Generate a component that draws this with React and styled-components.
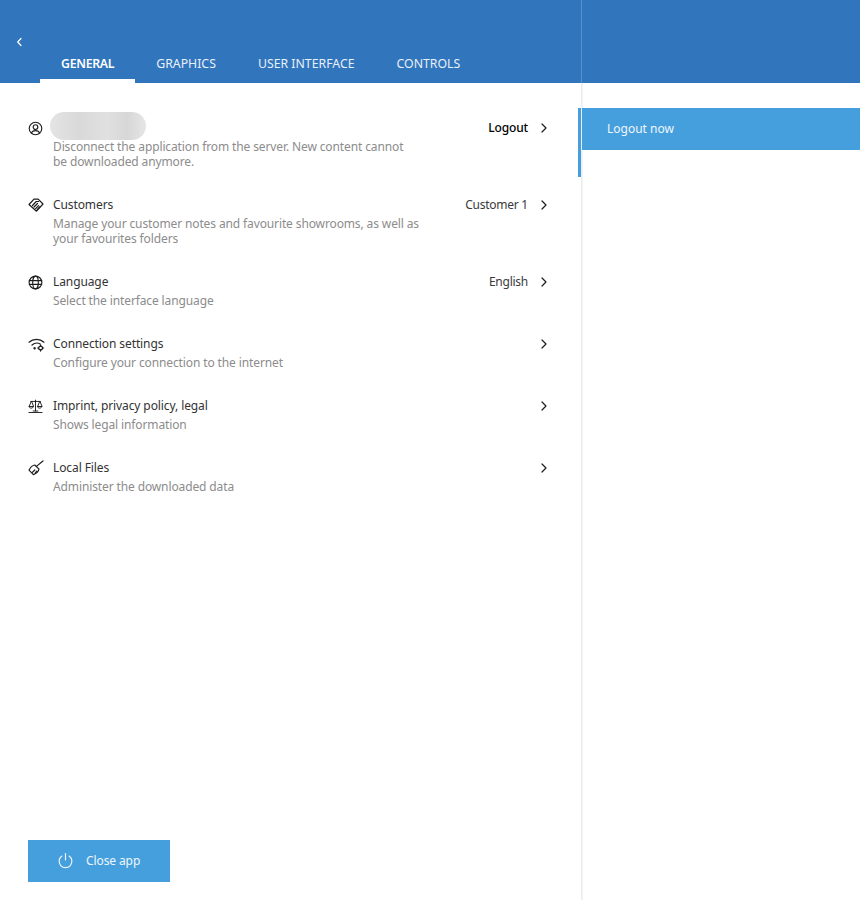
import React from "react";
import styled, { createGlobalStyle } from "styled-components";

const Global = createGlobalStyle`
  html, body { margin: 0; padding: 0; background: #fff; }
  body { font-family: "Noto Sans", "Open Sans", sans-serif; }
`;

const Page = styled.div`
  width: 860px;
  height: 900px;
  display: flex;
  flex-direction: column;
  overflow: hidden;
`;

const Header = styled.header`
  height: 83px;
  flex: none;
  background: #3175bd;
  display: grid;
  grid-template-columns: 581px 2px 1fr;
`;

const HeaderLeft = styled.div`
  display: flex;
  align-items: flex-end;
  position: relative;
`;

const HeaderRule = styled.div`
  background: #5a90cb;
  width: 1px;
`;

const BackButton = styled.button`
  position: absolute;
  left: 13px;
  top: 36px;
  width: 12px;
  height: 12px;
  padding: 0;
  border: 0;
  background: none;
  color: #fff;
  display: flex;
`;

const Tabs = styled.nav`
  display: flex;
  margin-left: 40px;
`;

const Tab = styled.div`
  height: 38px;
  padding: 11px 21px 0;
  box-sizing: border-box;
  display: flex;
  align-items: flex-start;
  line-height: 16px;
  font-size: 12.3px;
  letter-spacing: ${(p) => (p.$active ? "-0.3px" : "0")};
  color: ${(p) => (p.$active ? "#fff" : "#e8f0f8")};
  font-weight: ${(p) => (p.$active ? 600 : 400)};
  border-bottom: 4px solid ${(p) => (p.$active ? "#fff" : "transparent")};
  white-space: nowrap;
`;

const Body = styled.div`
  flex: 1;
  display: grid;
  grid-template-columns: 581px 2px 1fr;
  min-height: 0;
`;

const Left = styled.main`
  display: flex;
  flex-direction: column;
  justify-content: space-between;
  padding: 36.4px 0 18px;
`;

const List = styled.div`
  display: flex;
  flex-direction: column;
`;

const Row = styled.div`
  display: grid;
  grid-template-columns: 25px 1fr auto 20px;
  padding: 0 33px 0 28px;
  position: relative;
  margin-bottom: 27.5px;
`;

const Indicator = styled.span`
  position: absolute;
  right: 0;
  top: -11.4px;
  width: 3px;
  height: 69px;
  background: #459fdc;
`;

const IconCell = styled.div`
  width: 17px;
  height: 18px;
  display: flex;
  align-items: center;
  color: #1c1c1c;
`;

const TextCell = styled.div`
  min-width: 0;
`;

const Title = styled.div`
  font-size: 12px;
  line-height: 18px;
  letter-spacing: -0.1px;
  color: #333;
`;

const Blur = styled.div`
  width: 96px;
  height: 28px;
  margin: -7.4px 0 -2.6px -3px;
  border-radius: 14px;
  background: linear-gradient(90deg, #e4e4e4, #d9d9d9 30%, #e0e0e0 60%, #d7d7d7 80%, #e6e6e6);
  filter: blur(0.6px);
`;

const Description = styled.div`
  margin-top: 1.5px;
  font-size: 12px;
  line-height: 15px;
  letter-spacing: -0.12px;
  color: #8c8c8c;
  white-space: pre-line;
`;

const Value = styled.div`
  font-size: 12px;
  line-height: 18px;
  letter-spacing: ${(p) => (p.$strong ? "-0.15px" : "-0.25px")};
  color: ${(p) => (p.$strong ? "#000" : "#3a3a3a")};
  font-weight: ${(p) => (p.$strong ? 500 : 400)};
  white-space: nowrap;
`;

const Chevron = styled.div`
  height: 18px;
  display: flex;
  align-items: center;
  justify-content: flex-end;
  color: #1c1c1c;
`;

const CloseButton = styled.button`
  margin-left: 28px;
  width: 142px;
  height: 42px;
  background: #459fdc;
  border: 0;
  padding: 0 0 2px 29px;
  display: flex;
  align-items: center;
  gap: 12px;
  color: #eef6fc;
  font-family: inherit;
  font-size: 12px;
  letter-spacing: -0.1px;
`;

const Divider = styled.div`
  background: linear-gradient(90deg, #e9e9e9, #f7f7f7);
`;

const Right = styled.aside`
  padding-top: 25px;
  margin-left: -1px;
  display: flex;
  flex-direction: column;
`;

const ActionRow = styled.div`
  height: 42px;
  box-sizing: border-box;
  background: #459fdc;
  color: #eef6fc;
  font-size: 12px;
  display: flex;
  align-items: center;
  padding: 0 0 2px 25px;
`;

const Svg = ({ size = 16, children, sw = 1.2, vb = 16 }) => (
  <svg width={size} height={size} viewBox={`0 0 ${vb} ${vb}`} fill="none" stroke="currentColor" strokeWidth={sw} strokeLinecap="round" strokeLinejoin="round">
    {children}
  </svg>
);

const UserIcon = () => (
  <Svg size={15}>
    <circle cx="8" cy="8" r="6.7" />
    <circle cx="8" cy="6.5" r="2.5" />
    <path d="M3.6 13c.6-1.9 2.2-2.8 4.4-2.8s3.8.9 4.4 2.8" />
  </Svg>
);

const HandshakeIcon = () => (
  <Svg size={16}>
    <path d="M1 7.5 6 2.2h4.2L15 7l-6.5 7.2z" />
    <path d="M4.5 8.5 8.2 4.5h2.4" />
    <path d="M6 10l3.5-3.5M7.6 11.6l3-3M9.2 12.6l2.4-2.6" />
  </Svg>
);

const GlobeIcon = () => (
  <Svg size={15}>
    <circle cx="8" cy="8" r="6.8" />
    <ellipse cx="8" cy="8" rx="3" ry="6.8" />
    <path d="M1.4 6h13.2M1.4 10h13.2" />
  </Svg>
);

const WifiIcon = () => (
  <Svg size={17} vb={17}>
    <path d="M1 6.2C5.2 2.3 11.8 2.3 16 6.2" />
    <path d="M4 9c2.6-2.2 5.6-2.5 8.2-1" />
    <circle cx="6.6" cy="12.2" r=".6" />
    <circle cx="12.6" cy="12" r="1.9" />
    <path d="M12.6 8.9v1.2M12.6 13.9v1.2M15.7 12h-1.2M10.7 12H9.5" />
  </Svg>
);

const ScalesIcon = () => (
  <Svg size={15} sw={1}>
    <path d="M8 1.2v11.6M3 2.6h10M1 14.4h14M5.5 12.8h5" />
    <path d="M3.5 2.6 1.2 8c.3 2.4 4.3 2.4 4.6 0zM12.5 2.6 10.2 8c.3 2.4 4.3 2.4 4.6 0zM1.2 8h4.6M10.2 8h4.6" />
  </Svg>
);

const BroomIcon = () => (
  <Svg size={16}>
    <path d="M15 1 8.4 6.4" />
    <path d="M6.8 5 11 9.2c-.5 2.2-3.4 4.6-5.6 5.4L1 10.2C2 8 4.6 5.5 6.8 5z" />
    <path d="M4.3 12.4 6.8 10M7.4 12.6l1.4-1.4" />
  </Svg>
);

const RightChevron = () => (
  <svg width="7" height="10" viewBox="0 0 7 10" fill="none" stroke="currentColor" strokeWidth="1.2" strokeLinecap="round" strokeLinejoin="round">
    <path d="M1 1 5 5 1 9" />
  </svg>
);

const PowerIcon = () => (
  <Svg size={17} sw={1.1}>
    <path d="M8 1.5v6" />
    <path d="M4.6 3.8a6 6 0 1 0 6.8 0" />
  </Svg>
);

const rows = [
  { icon: <UserIcon />, blur: true, desc: "Disconnect the application from the server. New content cannot\nbe downloaded anymore.", value: "Logout", strong: true, active: true },
  { icon: <HandshakeIcon />, title: "Customers", desc: "Manage your customer notes and favourite showrooms, as well as\nyour favourites folders", value: "Customer 1" },
  { icon: <GlobeIcon />, title: "Language", desc: "Select the interface language", value: "English" },
  { icon: <WifiIcon />, title: "Connection settings", desc: "Configure your connection to the internet" },
  { icon: <ScalesIcon />, title: "Imprint, privacy policy, legal", desc: "Shows legal information" },
  { icon: <BroomIcon />, title: "Local Files", desc: "Administer the downloaded data" },
];

const tabs = [
  { label: "GENERAL", active: true },
  { label: "GRAPHICS" },
  { label: "USER INTERFACE" },
  { label: "CONTROLS" },
];

export default function App() {
  return (
    <Page>
      <Global />
      <Header>
        <HeaderLeft>
          <BackButton aria-label="Back">
            <svg width="12" height="12" viewBox="0 0 12 12" fill="none" stroke="currentColor" strokeWidth="1.2" strokeLinecap="round" strokeLinejoin="round">
              <path d="M8 2.5 4.7 6 8 9.5" />
            </svg>
          </BackButton>
          <Tabs>
            {tabs.map((t) => (
              <Tab key={t.label} $active={t.active}>
                {t.label}
              </Tab>
            ))}
          </Tabs>
        </HeaderLeft>
        <HeaderRule />
        <div />
      </Header>
      <Body>
        <Left>
          <List>
            {rows.map((r, i) => (
              <Row key={i}>
                {r.active && <Indicator />}
                <IconCell>{r.icon}</IconCell>
                <TextCell>
                  {r.blur ? <Blur /> : <Title>{r.title}</Title>}
                  <Description>{r.desc}</Description>
                </TextCell>
                <Value $strong={r.strong}>{r.value}</Value>
                <Chevron>
                  <RightChevron />
                </Chevron>
              </Row>
            ))}
          </List>
          <CloseButton>
            <PowerIcon />
            Close app
          </CloseButton>
        </Left>
        <Divider />
        <Right>
          <ActionRow>Logout now</ActionRow>
        </Right>
      </Body>
    </Page>
  );
}
